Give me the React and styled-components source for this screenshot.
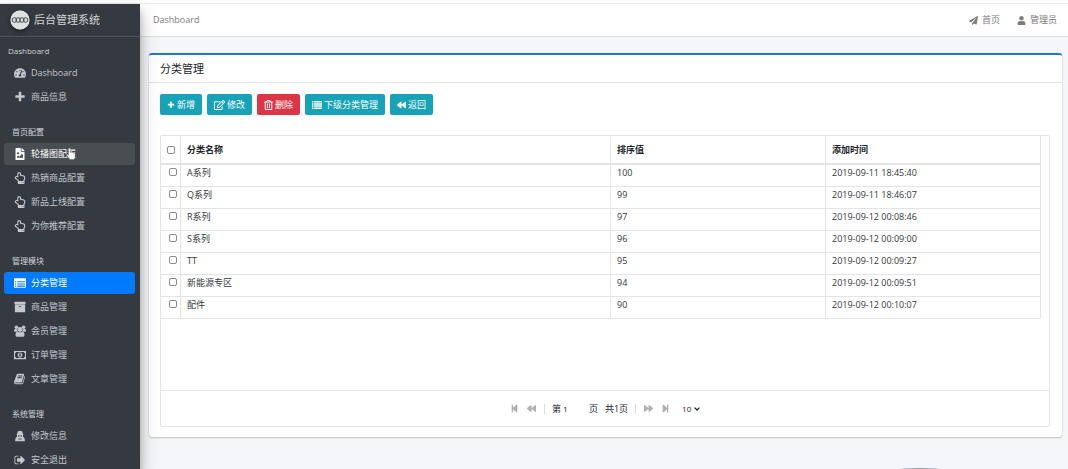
import React, { useState } from 'react';
import styled, { createGlobalStyle } from 'styled-components';
import {
  FaBackward,
  FaFileImage,
  FaForward,
  FaPaperPlane,
  FaRegEdit,
  FaRegHandPointUp,
  FaRegTrashAlt,
  FaStepBackward,
  FaStepForward,
  FaTachometerAlt,
  FaUser,
} from 'react-icons/fa';

const makeIcon = (d, size = 1792) =>
  function Icon() {
    return (
      <svg viewBox={`0 0 ${size} ${size}`} width="1em" height="1em" fill="currentColor" aria-hidden="true">
        <path d={d} fillRule="evenodd" />
      </svg>
    );
  };

const PlusIcon = makeIcon(
  'M1600 736v192q0 40-28 68t-68 28h-416v416q0 40-28 68t-68 28h-192q-40 0-68-28t-28-68v-416h-416q-40 0-68-28t-28-68v-192q0-40 28-68t68-28h416v-416q0-40 28-68t68-28h192q40 0 68 28t28 68v416h416q40 0 68 28t28 68z'
);
const ArchiveIcon = makeIcon(
  'M1088 832q0-26-19-45t-45-19h-256q-26 0-45 19t-19 45 19 45 45 19h256q26 0 45-19t19-45zm576-192v960q0 26-19 45t-45 19h-1408q-26 0-45-19t-19-45v-960q0-26 19-45t45-19h1408q26 0 45 19t19 45zm64-448v256q0 26-19 45t-45 19h-1536q-26 0-45-19t-19-45v-256q0-26 19-45t45-19h1536q26 0 45 19t19 45z'
);
const BookIcon = makeIcon(
  'M1639 478q40 57 18 129l-275 906q-19 64-76.5 107.5t-122.5 43.5h-923q-77 0-148.5-53.5t-99.5-131.5q-24-67-2-127 0-4 3-27t4-37q1-8-3-21.5t-3-19.5q2-11 8-21t16.5-23.5 16.5-23.5q23-38 45-91.5t30-91.5q3-10 .5-30t-.5-28q3-11 17-28t17-23q21-36 42-92t25-90q1-9-2.5-32t.5-28q4-13 22-30.5t22-22.5q19-26 42.5-84.5t27.5-96.5q1-8-3-25.5t-2-26.5q2-8 9-18t18-23 17-21q8-12 16.5-30.5t15-35 16-36 19.5-32 26.5-23.5 36-11.5 47.5 5.5l-1 3q38-9 51-9h761q74 0 114 56t18 130l-274 906q-36 119-71.5 153.5t-128.5 34.5h-869q-27 0-38 15-11 16-1 43 24 70 144 70h923q29 0 56-15.5t35-41.5l300-987q7-22 5-57 38 15 59 43zm-1064 2q-4 13 2 22.5t20 9.5h608q13 0 25.5-9.5t16.5-22.5l21-64q4-13-2-22.5t-20-9.5h-608q-13 0-25.5 9.5t-16.5 22.5zm-83 256q-4 13 2 22.5t20 9.5h608q13 0 25.5-9.5t16.5-22.5l21-64q4-13-2-22.5t-20-9.5h-608q-13 0-25.5 9.5t-16.5 22.5z'
);
const SignOutIcon = makeIcon(
  'M704 1440q0 4 1 20t.5 26.5-3 23.5-10 19.5-20.5 6.5h-320q-119 0-203.5-84.5t-84.5-203.5v-704q0-119 84.5-203.5t203.5-84.5h320q13 0 22.5 9.5t9.5 22.5q0 4 1 20t.5 26.5-3 23.5-10 19.5-20.5 6.5h-320q-66 0-113 47t-47 113v704q0 66 47 113t113 47h312l11.5 1 11.5 3 8 5.5 7 9 2 13.5zm928-544q0 26-19 45l-544 544q-19 19-45 19t-45-19-19-45v-288h-448q-26 0-45-19t-19-45v-384q0-26 19-45t45-19h448v-288q0-26 19-45t45-19 45 19l544 544q19 19 19 45z'
);
const ListIcon = makeIcon(
  'M0 192h256v256h-256zM384 192h1408v256h-1408zM0 576h256v256h-256zM384 576h1408v256h-1408zM0 960h256v256h-256zM384 960h1408v256h-1408zM0 1344h256v256h-256zM384 1344h1408v256h-1408z'
);
const ListAltIcon = makeIcon(
  'M100 192h1592q100 0 100 100v1208q0 100-100 100h-1592q-100 0-100-100v-1208q0-100 100-100zM160 640v160h160v-160zM480 640v160h1152v-160zM160 960v160h160v-160zM480 960v160h1152v-160zM160 1280v160h160v-160zM480 1280v160h1152v-160z'
);
const MoneyIcon = makeIcon(
  'M0 2.5h16v11H0zM3 4a2 2 0 0 1-1.6 1.7v4.6A2 2 0 0 1 3 12h10a2 2 0 0 1 1.6-1.7V5.7A2 2 0 0 1 13 4zM8 4.5c1.9 0 3 1.6 3 3.5s-1.1 3.5-3 3.5S5 9.9 5 8s1.1-3.5 3-3.5zM7 6v4h2V6z',
  16
);
const SecretIcon = makeIcon(
  'M5 2Q8 .2 11 2l1 3.5 1 .5-1 1v2q2.5 1 2.5 6h-13q0-5 2.500-6V7L3 6l1-.5zM5.500 7v1.600h1.800V7zM8.700 7v1.600h1.800V7zM6.300 11v2h1.200v-2zM8.700 11v2h1.200v-2z',
  16
);

function UsersIcon() {
  return (
    <svg viewBox="0 0 16 16" width="1em" height="1em" fill="currentColor" aria-hidden="true">
      <circle cx="3.2" cy="3" r="2.3" />
      <circle cx="12.8" cy="3" r="2.3" />
      <circle cx="8" cy="6" r="3.2" />
      <path d="M0 8q0-3 2-3 1.3.8 2.5.5Q4 8 5 9H1.5Q0 9 0 8zM16 8q0-3-2-3-1.3.8-2.500.5Q12 8 11 9h3.5Q16 9 16 8zM2 13.500Q2 9 5 9q3 1.600 6 0 3 0 3 4.500 0 2-2 2H4q-2 0-2-2z" />
    </svg>
  );
}

const MENU = [
  {
    label: 'Dashboard',
    items: [
      { text: 'Dashboard', icon: FaTachometerAlt },
      { text: '商品信息', icon: PlusIcon },
    ],
  },
  {
    label: '首页配置',
    items: [
      { text: '轮播图配置', icon: FaFileImage, state: 'hover' },
      { text: '热销商品配置', icon: FaRegHandPointUp },
      { text: '新品上线配置', icon: FaRegHandPointUp },
      { text: '为你推荐配置', icon: FaRegHandPointUp },
    ],
  },
  {
    label: '管理模块',
    items: [
      { text: '分类管理', icon: ListAltIcon, state: 'active' },
      { text: '商品管理', icon: ArchiveIcon },
      { text: '会员管理', icon: UsersIcon },
      { text: '订单管理', icon: MoneyIcon },
      { text: '文章管理', icon: BookIcon },
    ],
  },
  {
    label: '系统管理',
    items: [
      { text: '修改信息', icon: SecretIcon },
      { text: '安全退出', icon: SignOutIcon },
    ],
  },
];

const ACTIONS = [
  { text: '新增', icon: PlusIcon, size: 8 },
  { text: '修改', icon: FaRegEdit, size: 11 },
  { text: '删除', icon: FaRegTrashAlt, size: 9, danger: true },
  { text: '下级分类管理', icon: ListIcon, size: 10 },
  { text: '返回', icon: FaBackward, size: 9 },
];

const ROWS = [
  { name: 'A系列', sort: 100, time: '2019-09-11 18:45:40' },
  { name: 'Q系列', sort: 99, time: '2019-09-11 18:46:07' },
  { name: 'R系列', sort: 97, time: '2019-09-12 00:08:46' },
  { name: 'S系列', sort: 96, time: '2019-09-12 00:09:00' },
  { name: 'TT', sort: 95, time: '2019-09-12 00:09:27' },
  { name: '新能源专区', sort: 94, time: '2019-09-12 00:09:51' },
  { name: '配件', sort: 90, time: '2019-09-12 00:10:07' },
];

function Sidebar() {
  return (
    <Aside>
      <Brand href="#">
        <Logo viewBox="0 0 20 20" aria-hidden="true">
          <circle cx="10" cy="10" r="9.7" fill="#dfe1e1" />
          <g fill="none" stroke="#4c5155" strokeWidth="1">
            <circle cx="4.4" cy="10" r="2.3" />
            <circle cx="8.1" cy="10" r="2.3" />
            <circle cx="11.9" cy="10" r="2.3" />
            <circle cx="15.6" cy="10" r="2.3" />
          </g>
        </Logo>
        后台管理系统
      </Brand>
      <nav>
        {MENU.map((group, index) => (
          <section key={group.label}>
            <GroupLabel $first={index === 0}>{group.label}</GroupLabel>
            <MenuList>
              {group.items.map(({ text, icon: Icon, state }) => (
                <li key={text}>
                  <MenuLink href="#" $state={state}>
                    <MenuIcon>
                      <Icon />
                    </MenuIcon>
                    {text}
                    {state === 'hover' && <HandPointer />}
                  </MenuLink>
                </li>
              ))}
            </MenuList>
          </section>
        ))}
      </nav>
    </Aside>
  );
}

function HandPointer() {
  return (
    <Pointer viewBox="0 0 12 16" aria-hidden="true">
      <path
        d="M3.2 9.6V1.8a1.1 1.1 0 0 1 2.2 0v4.4l.3-.1a1 1 0 0 1 1.7.5 1 1 0 0 1 1.8.5 1 1 0 0 1 1.8.8v3.3c0 1-.7 2.1-1 3.3H4.4C3.8 12.7 2.2 11.2.8 9.2c-.5-1 .7-1.6 1.4-.9z"
        fill="#fff"
        stroke="#444b50"
        strokeWidth=".5"
      />
    </Pointer>
  );
}

function CategoryTable() {
  const [checked, setChecked] = useState([]);
  const toggle = (name) =>
    setChecked(checked.includes(name) ? checked.filter((n) => n !== name) : [...checked, name]);
  const all = checked.length === ROWS.length;

  return (
    <Table>
      <colgroup>
        <CheckCol />
        <NameCol />
        <DataCol />
        <DataCol />
      </colgroup>
      <thead>
        <tr>
          <CheckHead>
            <CheckBox
              aria-label="全选"
              checked={all}
              onChange={() => setChecked(all ? [] : ROWS.map((row) => row.name))}
            />
          </CheckHead>
          <Th>分类名称</Th>
          <Th>排序值</Th>
          <Th>添加时间</Th>
        </tr>
      </thead>
      <tbody>
        {ROWS.map((row) => (
          <tr key={row.name}>
            <CheckCell>
              <CheckBox
                aria-label={row.name}
                checked={checked.includes(row.name)}
                onChange={() => toggle(row.name)}
              />
            </CheckCell>
            <Td>{row.name}</Td>
            <Td>{row.sort}</Td>
            <Td>{row.time}</Td>
          </tr>
        ))}
      </tbody>
    </Table>
  );
}

function Pager() {
  const [page, setPage] = useState('1');
  return (
    <PagerBar>
      <PageButton aria-label="首页"><FaStepBackward /></PageButton>
      <PageButton aria-label="上一页"><FaBackward /></PageButton>
      <Divider />
      <PageLabel>
        第
        <PageInput value={page} onChange={(e) => setPage(e.target.value)} />
        页
      </PageLabel>
      <span>共1页</span>
      <Divider />
      <PageButton aria-label="下一页"><FaForward /></PageButton>
      <PageButton aria-label="末页"><FaStepForward /></PageButton>
      <SizeBox>
        <SizeSelect aria-label="每页条数" defaultValue="10">
          <option>10</option>
          <option>20</option>
          <option>50</option>
        </SizeSelect>
        <svg viewBox="0 0 6 4" width="6" height="4" fill="none" stroke="#222" strokeWidth="1.3" aria-hidden="true">
          <path d="M.6.6 3 3 5.4.6" />
        </svg>
      </SizeBox>
    </PagerBar>
  );
}

function App() {
  return (
    <Page>
      <GlobalStyle />
      <TopStrip />
      <Shell>
        <Sidebar />
        <Main>
          <Header>
            <HeaderLink href="#">Dashboard</HeaderLink>
            <HeaderNav>
              <HeaderLink href="#"><FaPaperPlane />首页</HeaderLink>
              <HeaderLink href="#"><FaUser />管理员</HeaderLink>
            </HeaderNav>
          </Header>
          <Content>
            <Card>
              <CardTitle>分类管理</CardTitle>
              <CardBody>
                <Toolbar>
                  {ACTIONS.map(({ text, icon: Icon, size, danger }) => (
                    <ActionButton key={text} type="button" $iconSize={size} $danger={danger}>
                      <Icon />
                      {text}
                    </ActionButton>
                  ))}
                </Toolbar>
                <Grid>
                  <GridView>
                    <CategoryTable />
                  </GridView>
                  <Pager />
                </Grid>
              </CardBody>
            </Card>
          </Content>
        </Main>
      </Shell>
      <FloatingEdge />
    </Page>
  );
}

const GlobalStyle = createGlobalStyle`
  * {
    box-sizing: border-box;
  }
  body {
    margin: 0;
    font-family: 'Open Sans', 'Noto Sans CJK SC', sans-serif;
    font-size: 9px;
    line-height: 12px;
    color: #212529;
    background: #f4f6f9;
  }
  a {
    color: inherit;
    text-decoration: none;
  }
  button, input, select {
    font: inherit;
    color: inherit;
  }
`;
const Page = styled.div`
  position: relative;
  display: flex;
  flex-direction: column;
  height: 100vh;
  overflow: hidden;
`;
const TopStrip = styled.div`
  flex: none;
  height: 4px;
  background: #fff;
  border-bottom: 1px solid #e9ebec;
`;
const Shell = styled.div`
  flex: 1;
  display: flex;
  min-height: 0;
`;
const Aside = styled.aside`
  flex: none;
  width: 140px;
  z-index: 2;
  background: #343a40;
  color: #c2c7d0;
  box-shadow: 0 9px 18px rgba(0, 0, 0, 0.25), 0 7px 7px rgba(0, 0, 0, 0.22);
`;
const Brand = styled.a`
  display: flex;
  align-items: center;
  gap: 4px;
  height: 33px;
  padding-left: 10px;
  border-bottom: 1px solid #4b545c;
  font-size: 11px;
  line-height: 16px;
  color: #d3d5d7;
`;
const Logo = styled.svg`
  width: 20px;
  height: 20px;
  border-radius: 50%;
  box-shadow: 0 2px 4px rgba(0, 0, 0, 0.4);
`;
const GroupLabel = styled.h2`
  margin: 0;
  padding: ${({ $first }) => ($first ? '9px 8px 6px' : '19px 12px 6px')};
  font-size: 8px;
  font-weight: 400;
  line-height: 10px;
  color: #d0d4db;
`;
const MenuList = styled.ul`
  display: flex;
  flex-direction: column;
  gap: 2px;
  margin: 0;
  padding: 0 5px 0 4px;
  list-style: none;
`;
const MenuLink = styled.a`
  position: relative;
  display: flex;
  align-items: center;
  gap: 5px;
  height: 22px;
  padding-left: 10px;
  border-radius: 3px;
  color: ${({ $state }) => ($state ? '#fff' : '#c2c7d0')};
  background: ${({ $state }) =>
    $state === 'active' ? '#007bff' : $state === 'hover' ? '#494e53' : 'transparent'};
`;
const MenuIcon = styled.span`
  display: flex;
  justify-content: center;
  width: 12px;
  font-size: 12px;
`;
const Pointer = styled.svg`
  position: absolute;
  left: 62px;
  top: 4px;
  width: 10px;
  height: 14px;
`;
const Main = styled.main`
  flex: 1;
  min-width: 0;
`;
const Header = styled.header`
  display: flex;
  align-items: center;
  justify-content: space-between;
  height: 33px;
  padding: 0 11px 0 13px;
  background: #fff;
  border-bottom: 1px solid #dee2e6;
`;
const HeaderNav = styled.nav`
  display: flex;
  gap: 17px;
`;
const HeaderLink = styled.a`
  display: flex;
  align-items: center;
  gap: 4px;
  color: #7c7c7c;
`;
const Content = styled.div`
  padding: 16px 6px 16px 9px;
`;
const Card = styled.section`
  background: #fff;
  border-top: 2px solid #1f78d1;
  border-radius: 3px;
  box-shadow: 0 0 1px rgba(0, 0, 0, 0.2), 0 1px 2px rgba(0, 0, 0, 0.2);
`;
const CardTitle = styled.h1`
  margin: 0;
  padding: 6px 11px 5px;
  border-bottom: 1px solid #e3e4e5;
  font-size: 11px;
  font-weight: 400;
  line-height: 16px;
`;
const CardBody = styled.div`
  padding: 11px 12px 10px 11px;
`;
const Toolbar = styled.div`
  display: flex;
  gap: 5px;
  margin-bottom: 20px;
`;
const ActionButton = styled.button`
  display: flex;
  align-items: center;
  gap: 2px;
  height: 21px;
  padding: 0 7px;
  border: 0;
  border-radius: 2px;
  color: #fff;
  background: ${({ $danger }) => ($danger ? '#dc3545' : '#17a2b8')};

  svg {
    width: ${({ $iconSize }) => $iconSize}px;
    height: 10px;
  }
`;
const Grid = styled.div`
  border: 1px solid #e3e4e5;
  border-radius: 2px;
`;
const GridView = styled.div`
  min-height: 254px;
  padding-right: 8px;
`;
const Table = styled.table`
  width: 100%;
  table-layout: fixed;
  border-spacing: 0;
`;
const CheckCol = styled.col`
  width: 20px;
`;
const NameCol = styled.col`
  width: 50%;
`;
const DataCol = styled.col`
  width: 25%;
`;
const Th = styled.th`
  height: 29px;
  padding: 0 6px;
  border-right: 1px solid #e3e4e5;
  border-bottom: 2px solid #e3e4e5;
  text-align: left;
  font-weight: 700;
`;
const Td = styled.td`
  height: 22px;
  padding: 2px 6px;
  border-right: 1px solid #e3e4e5;
  border-bottom: 1px solid #e3e4e5;
  vertical-align: top;
  color: #33373b;
`;
const CheckHead = styled(Th)`
  padding: 0 6px;
`;
const CheckCell = styled(Td)`
  padding: 3px 2px 3px 8px;
`;
const CheckBox = styled.input.attrs({ type: 'checkbox' })`
  appearance: none;
  display: block;
  width: 8px;
  height: 8px;
  margin: 0;
  border: 1px solid #8a8a8a;
  border-radius: 2px;
  background: #fff;
  &:checked {
    background: #007bff;
  }
`;
const PagerBar = styled.div`
  display: flex;
  align-items: center;
  justify-content: center;
  gap: 7px;
  height: 36px;
  border-top: 1px solid #e3e4e5;
`;
const PageButton = styled.button.attrs({ type: 'button' })`
  display: flex;
  justify-content: center;
  width: 10px;
  padding: 0;
  border: 0;
  background: none;
  color: #b0b0b0;
`;
const Divider = styled.span`
  width: 1px;
  height: 10px;
  background: #dcdcdc;
`;
const PageLabel = styled.label`
  display: flex;
  align-items: center;
`;
const PageInput = styled.input`
  width: 28px;
  height: 12px;
  padding: 0 2px;
  border: 0;
  background: none;
  font-size: 8px;
`;
const SizeBox = styled.div`
  display: flex;
  align-items: center;
  gap: 2px;
  padding-left: 5px;
`;
const SizeSelect = styled.select`
  appearance: none;
  width: 10px;
  padding: 0;
  border: 0;
  background: none;
  font-size: 8px;
`;
const FloatingEdge = styled.div`
  position: absolute;
  right: 125px;
  bottom: -11px;
  width: 46px;
  height: 12px;
  border-radius: 50% 50% 0 0 / 2px;
  background: #93a1ac;
`;

export default App;
